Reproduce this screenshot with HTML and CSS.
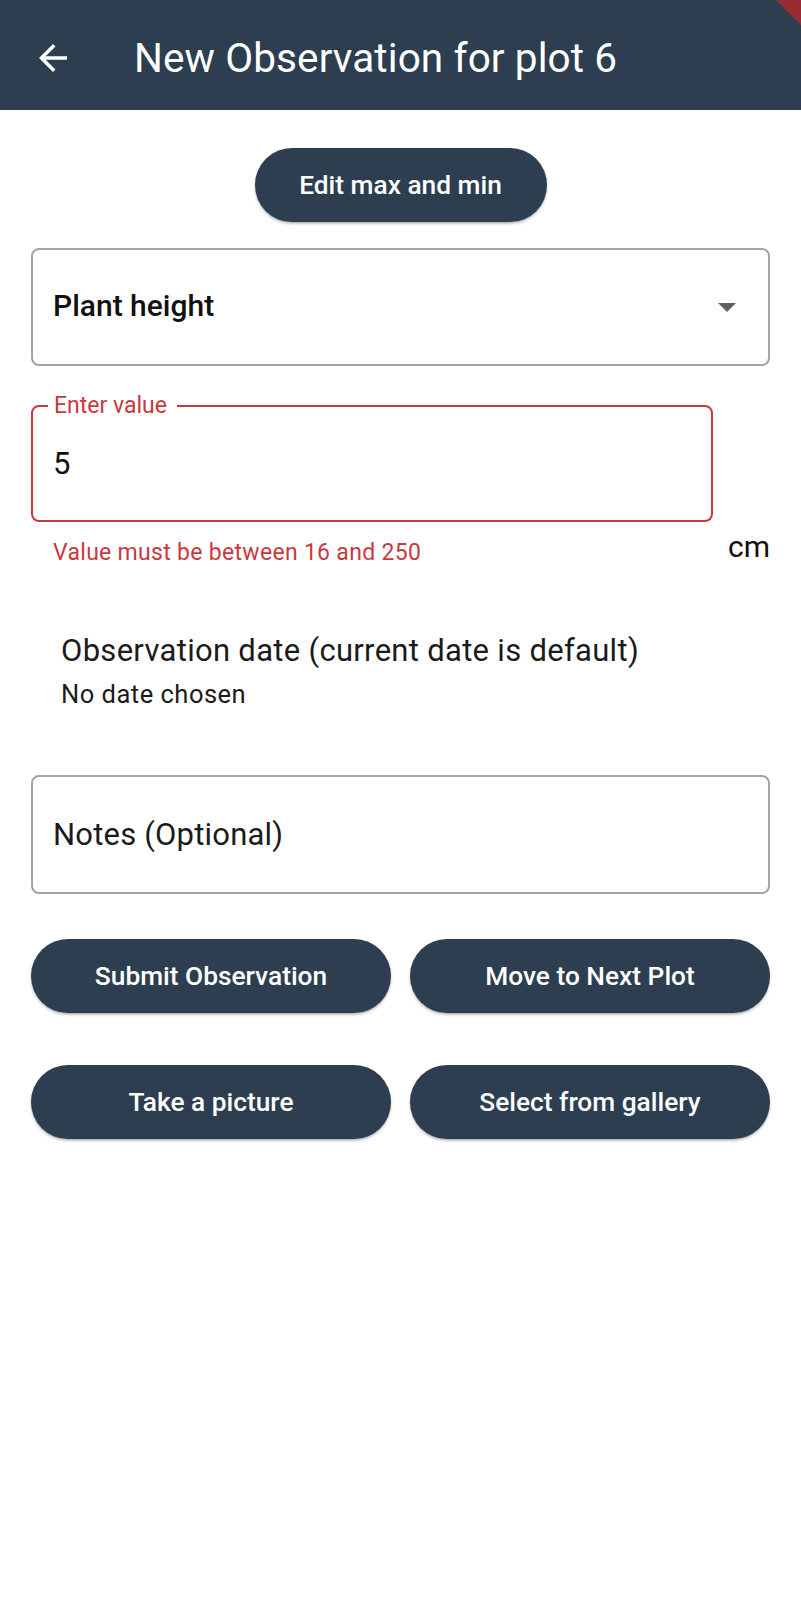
FILE: index.html
```html
<!DOCTYPE html>
<html lang="en">
<head>
<meta charset="utf-8">
<title>New Observation for plot 6</title>
<link rel="stylesheet" href="styles.css">
</head>
<body>
<header class="appbar">
  <button class="back" aria-label="Back">
    <svg viewBox="0 0 24 24" width="42" height="42"><path d="M20 11H7.83l5.59-5.59L12 4l-8 8 8 8 1.41-1.41L7.83 13H20v-2z" fill="#ffffff"/></svg>
  </button>
  <h1 class="title">New Observation for plot 6</h1>
  <div class="debug-banner"></div>
</header>
<main class="content">
  <div class="center-row">
    <button class="pill pill-edit">Edit max and min</button>
  </div>

  <div class="dropdown">
    <span class="dropdown-text">Plant height</span>
    <span class="caret"></span>
  </div>

  <div class="value-row">
    <div class="value-col">
      <div class="field field-error">
        <span class="field-label">Enter value</span>
        <span class="field-value">5</span>
      </div>
      <div class="error-text">Value must be between 16 and 250</div>
    </div>
    <div class="unit">cm</div>
  </div>

  <div class="date-block">
    <div class="date-title">Observation date (current date is default)</div>
    <div class="date-sub">No date chosen</div>
  </div>

  <div class="notes">
    <span class="notes-label">Notes (Optional)</span>
  </div>

  <div class="btn-grid">
    <button class="pill">Submit Observation</button>
    <button class="pill">Move to Next Plot</button>
    <button class="pill">Take a picture</button>
    <button class="pill">Select from gallery</button>
  </div>
</main>
</body>
</html>
```

FILE: styles.css
```css
* { box-sizing: border-box; }
html, body { margin: 0; padding: 0; background: #ffffff; }
body {
  font-family: Roboto, "Liberation Sans", sans-serif;
  color: #1b1b1b;
  width: 801px;
  min-height: 1600px;
  overflow: hidden;
}
.appbar {
  position: relative;
  height: 110px;
  background: #2c3e50;
  display: flex;
  align-items: center;
  padding-top: 6px;
  overflow: hidden;
}
.back {
  width: 56px;
  height: 56px;
  margin-left: 25px;
  background: none;
  border: none;
  padding: 0;
  display: flex;
  align-items: center;
  justify-content: center;
}
.title {
  margin: 0 0 0 53px;
  font-size: 40.5px;
  font-weight: 400;
  color: #ffffff;
  letter-spacing: 0.1px;
}
.debug-banner {
  position: absolute;
  top: 0;
  right: 0;
  width: 25px;
  height: 25px;
  background: #9c2a31;
  clip-path: polygon(0 0, 100% 0, 100% 100%);
}
.content {
  padding: 0 31px;
}
.center-row {
  display: flex;
  justify-content: center;
  margin-top: 38px;
}
.pill {
  height: 74px;
  border: none;
  border-radius: 37px;
  background: #2c3e50;
  color: #ffffff;
  font-family: Roboto, "Liberation Sans", sans-serif;
  font-size: 26.3px;
  font-weight: 500;
  box-shadow: 0 2px 3px rgba(0,0,0,0.22), 0 1px 1px rgba(0,0,0,0.12);
  padding: 0;
}
.pill-edit {
  width: 292px;
}
.dropdown {
  margin-top: 26px;
  height: 118px;
  border: 2px solid #a4a4a4;
  border-radius: 8px;
  display: flex;
  align-items: center;
  justify-content: space-between;
  padding: 0 32px 4px 20px;
}
.dropdown-text {
  font-size: 30px;
  font-weight: 500;
  color: #111111;
}
.caret {
  width: 0;
  height: 0;
  border-left: 9px solid transparent;
  border-right: 9px solid transparent;
  border-top: 9px solid #616161;
  margin-top: 4px;
}
.value-row {
  margin-top: 39px;
  display: flex;
  align-items: flex-end;
  gap: 15px;
}
.value-col {
  flex: 1;
}
.field {
  position: relative;
  height: 117px;
  border-radius: 8px;
  display: flex;
  align-items: center;
  padding-left: 20px;
}
.field-error {
  border: 2px solid #c8393e;
}
.field-label {
  position: absolute;
  top: -15px;
  left: 15px;
  padding: 0 10px 0 6px;
  background: #ffffff;
  color: #c8393e;
  font-size: 23px;
  line-height: 28px;
}
.field-value {
  font-size: 31px;
  color: #111111;
}
.error-text {
  margin-top: 17px;
  padding-left: 22px;
  font-size: 23px;
  line-height: 28px;
  color: #c8393e;
  letter-spacing: 0.3px;
}
.unit {
  font-size: 30px;
  line-height: 34px;
  color: #111111;
  padding-bottom: 3px;
}
.date-block {
  margin-top: 64px;
  padding-left: 30px;
}
.date-title {
  font-size: 31px;
  line-height: 40px;
  letter-spacing: 0.3px;
  color: #1b1b1b;
}
.date-sub {
  margin-top: 8px;
  font-size: 25.5px;
  line-height: 30px;
  letter-spacing: 0.5px;
  color: #1b1b1b;
}
.notes {
  margin-top: 66px;
  height: 119px;
  border: 2px solid #a4a4a4;
  border-radius: 8px;
  display: flex;
  align-items: center;
  padding-left: 20px;
}
.notes-label {
  font-size: 31px;
  color: #1b1b1b;
  letter-spacing: 0.2px;
}
.btn-grid {
  margin-top: 45px;
  display: grid;
  grid-template-columns: 1fr 1fr;
  column-gap: 19px;
  row-gap: 52px;
}
```
